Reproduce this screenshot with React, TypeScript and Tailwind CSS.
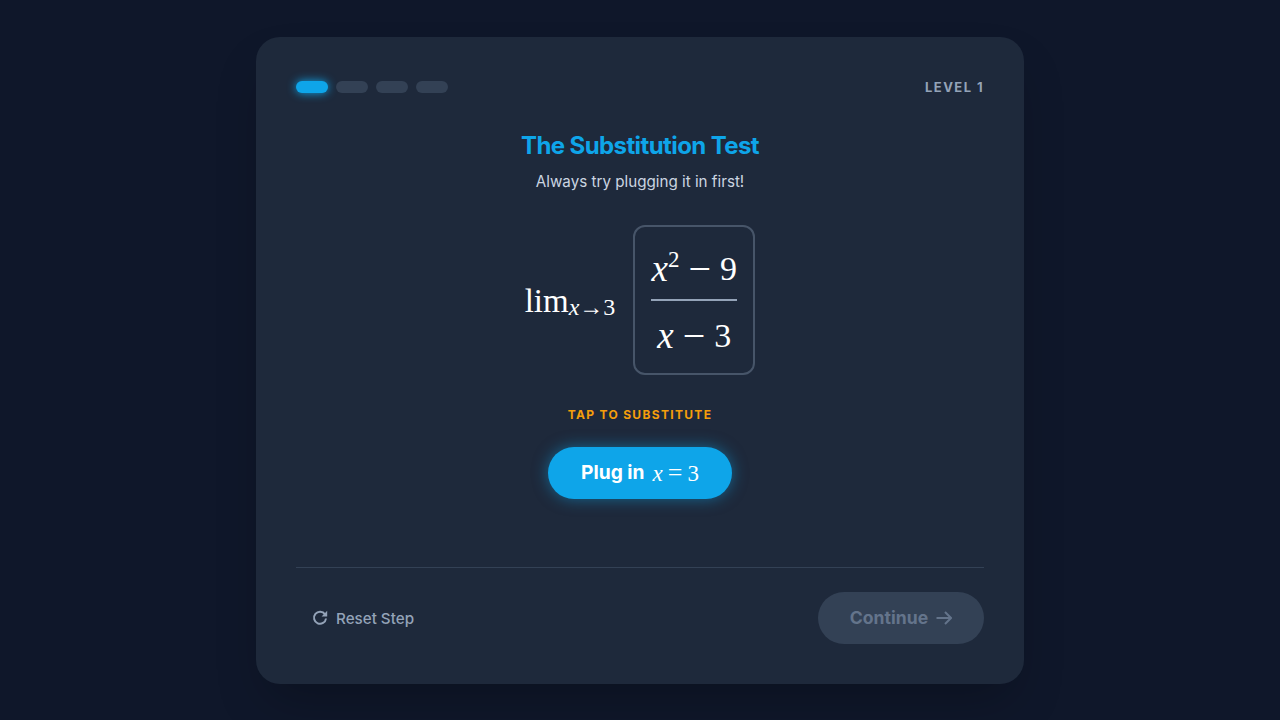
const sans = "font-['Inter','Liberation_Sans',sans-serif]";
const math = "font-['Liberation_Serif','DejaVu_Serif',serif]";

export default function App() {
  return (
    <div className={`flex min-h-[720px] items-center justify-center bg-[#0f172a] ${sans}`}>
      <div className="flex h-[647px] w-[768px] flex-col rounded-3xl bg-[#1e293b] p-10 shadow-2xl">
        <div className="flex h-5 items-center justify-between">
          <div className="flex gap-2">
            <div className="h-3 w-8 rounded-full bg-[#0ea5e9] shadow-[0_0_10px_#0ea5e9]" />
            <div className="h-3 w-8 rounded-full bg-[#334155]" />
            <div className="h-3 w-8 rounded-full bg-[#334155]" />
            <div className="h-3 w-8 rounded-full bg-[#334155]" />
          </div>
          <span className="pt-[2px] text-[13px] font-bold tracking-[0.11em] text-[#94a3b8]">LEVEL 1</span>
        </div>

        <div className="mt-[33px] flex flex-1 flex-col items-center">
          <h1 className="text-2xl font-bold tracking-tight text-[#0ea5e9]">The Substitution Test</h1>
          <p className="mt-2 text-[15.2px] leading-6 text-[#cbd5e1]">Always try plugging it in first!</p>

          <div className={`mt-[31px] flex items-center gap-[18px] text-white ${math}`}>
            <div className="mt-[3px] flex items-baseline">
              <span className="text-[33px] leading-none">lim</span>
              <span className="translate-y-[3px] text-[24px] leading-none">
                <i>x</i>→3
              </span>
            </div>
            <div className="flex h-[150px] w-[122px] flex-col items-center rounded-xl border-2 border-[#475569] pt-[17px] text-[34px] leading-none">
              <div className="flex h-[50px] items-center justify-center">
                <i className="text-[37px]">x</i>
                <sup className="translate-y-[3px] text-[23px]">2</sup>
                <span className="mx-[9px] text-[40px]">−</span>9
              </div>
              <div className="mt-[5px] h-0.5 w-[86px] bg-[#94a3b8]" />
              <div className="mt-[10px] flex h-[50px] items-center justify-center">
                <i className="text-[37px]">x</i>
                <span className="mx-[9px] text-[40px]">−</span>3
              </div>
            </div>
          </div>

          <p className="mt-8 text-xs font-bold tracking-[0.11em] text-[#f59e0b]">TAP TO SUBSTITUTE</p>

          <button className="mt-6 flex h-[52px] w-[184px] items-center justify-center gap-2 rounded-full bg-[#0ea5e9] text-[19.2px] font-bold text-white shadow-[0_0_15px_rgba(14,165,233,0.5)]">
            Plug in
            <span className={`text-[23px] font-normal ${math}`}>
              <i>x</i>
              <span className="mx-[5px] text-[26px]">=</span>3
            </span>
          </button>
        </div>

        <div className="flex items-center justify-between border-t border-[#334155] pt-6">
          <button className="flex items-center gap-2 px-4 text-[15.2px] leading-6 font-medium text-[#94a3b8]">
            <svg viewBox="0 0 16 16" className="h-4 w-4" fill="none" stroke="currentColor" strokeWidth="2">
              <path d="M13 4.4A6 6 0 1 0 14 8.5" />
              <path d="M15.2 0.8v5.6H9.6z" fill="currentColor" stroke="none" />
            </svg>
            <span className="pt-[3px]">Reset Step</span>
          </button>
          <button className="flex h-[52px] w-[166px] items-center justify-center gap-2 rounded-full bg-[#334155] text-[17.6px] leading-6 font-bold text-[#64748b]">
            <span className="pt-px">Continue</span>
            <svg viewBox="0 0 16 16" className="h-4 w-4" fill="none" stroke="currentColor" strokeWidth="2">
              <path d="M0.5 8H15" />
              <path d="M9 2l6 6-6 6" />
            </svg>
          </button>
        </div>
      </div>
    </div>
  );
}
